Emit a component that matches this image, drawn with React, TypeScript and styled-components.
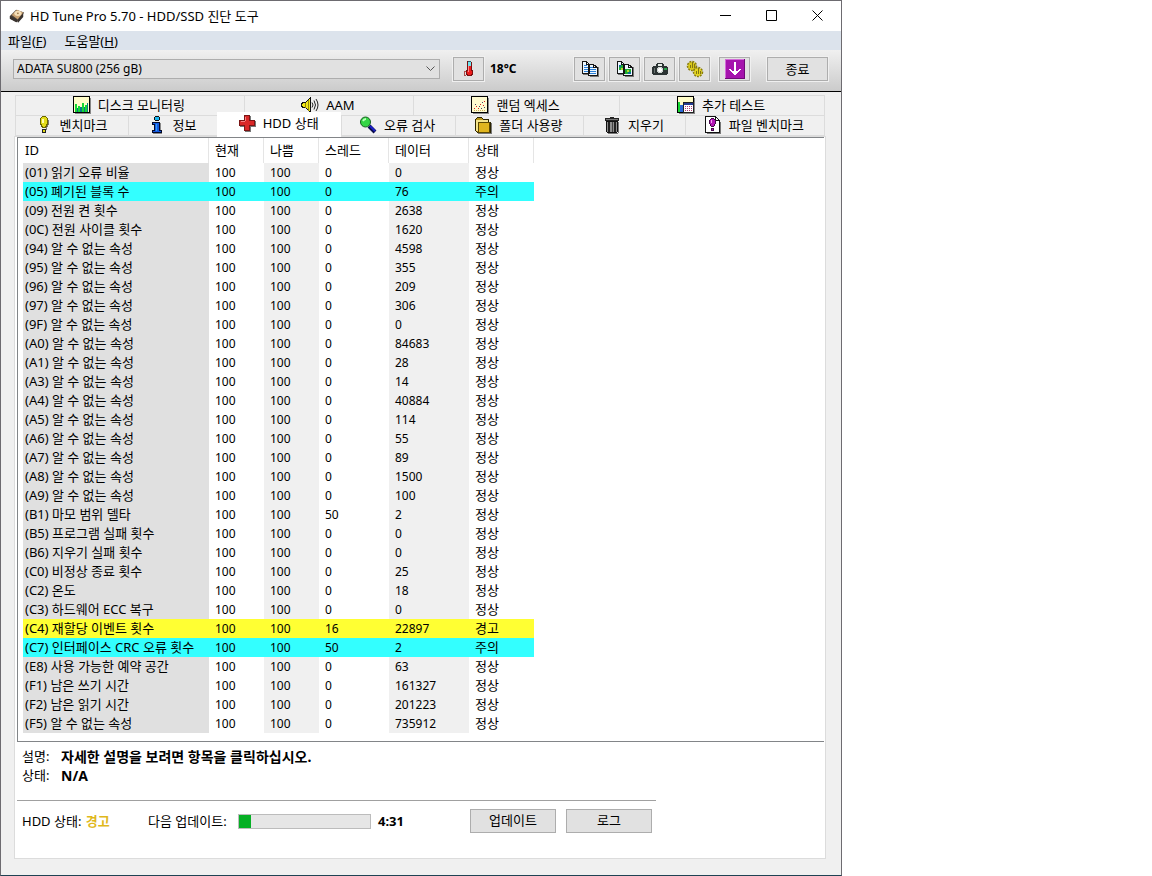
import React, { ReactNode } from "react";
import styled, { createGlobalStyle, css } from "styled-components";

const GlobalStyle = createGlobalStyle`
  * { box-sizing: border-box; }
  body {
    margin: 0;
    background: #ffffff;
    color: #000000;
    font: 13px/18px "Noto Sans", "Noto Sans CJK KR", sans-serif;
  }
  button, select { font: inherit; color: inherit; }
  svg { display: block; flex: none; }
`;

const AppWindow = styled.main`
  width: 100%;
  max-width: 842px;
  display: flex;
  flex-direction: column;
  background: #f0f0f0;
  border: 1px solid #6d6b70;
  border-bottom-color: #1f4253;
`;

const TitleBar = styled.header`
  display: flex;
  align-items: center;
  height: 30px;
  padding-left: 8px;
  gap: 5px;
  background: #ffffff;
`;

const Title = styled.h1`
  flex: 1;
  margin: 0;
  font-size: 13px;
  font-weight: 400;
`;

const Controls = styled.div`
  display: flex;
  align-self: stretch;
`;

const ControlButton = styled.button`
  display: flex;
  align-items: center;
  justify-content: center;
  width: 46px;
  padding: 0 1px 1px 0;
  border: 0;
  background: transparent;
`;

const MenuBar = styled.nav`
  display: flex;
  gap: 18px;
  height: 19px;
  padding-left: 7px;
  background: #dce3ec;
`;

const MenuItem = styled.button`
  padding: 0;
  border: 0;
  background: transparent;
`;

const Toolbar = styled.div`
  display: flex;
  align-items: center;
  height: 42px;
  padding: 0 13px 4px 12px;
  background: linear-gradient(#f0f0f0, #cbcbcb);
  border-bottom: 1px solid #000000;
`;

const DriveField = styled.div`
  display: flex;
  align-items: center;
  flex: 0 1 427px;
  min-width: 0;
  height: 20px;
  padding-right: 4px;
  background: #e1e1e1;
  border: 1px solid #adadad;
`;

const DriveSelect = styled.select`
  appearance: none;
  flex: 1;
  min-width: 0;
  height: 18px;
  padding: 0 0 0 3px;
  border: 0;
  background: transparent;
  font-size: 12px;
`;

const faceButton = css`
  display: flex;
  align-items: center;
  justify-content: center;
  flex: none;
  height: 24px;
  padding: 0;
  background: #e1e1e1;
  border: 1px solid #adadad;
`;

const ToolButton = styled.button<{ $lead?: number }>`
  ${faceButton}
  width: 31px;
  padding-left: 1px;
  margin-left: ${(p) => p.$lead ?? 4}px;
  outline: 1px solid #f0f0f0;
`;

const ExitButton = styled.button`
  ${faceButton}
  width: 61px;
  margin-left: 17px;
  outline: 1px solid #f0f0f0;
`;

const Temperature = styled.strong`
  flex: 1;
  padding-left: 6px;
  font-size: 12px;
`;

const Workspace = styled.div`
  padding: 3px 15px 16px 13px;
`;

const TabRow = styled.div`
  display: flex;
  margin: 0 1px;
  border-right: 1px solid #dcdcdc;
`;

const Tab = styled.button<{ $size: number; $active?: boolean }>`
  display: flex;
  align-items: center;
  justify-content: center;
  gap: 7px;
  flex: ${(p) => p.$size} 1 0;
  min-width: 0;
  height: 21px;
  margin-bottom: -1px;
  padding: 0 2px 2px 0;
  white-space: nowrap;
  background: #f0f0f0;
  border: solid #dcdcdc;
  border-width: 1px 0 1px 1px;
  ${(p) =>
    p.$active &&
    css`
      position: relative;
      height: 25px;
      margin-top: -3px;
      padding-bottom: 3px;
      background: #ffffff;
      border-color: #ffffff;
    `}
`;

const Panel = styled.section`
  background: #ffffff;
  border: 1px solid #dcdcdc;
  padding: 0 1px 25px 2px;
`;

const ListBox = styled.div`
  padding: 0 0 8px 5px;
  border: solid #828588;
  border-width: 1px 0 1px 1px;
`;

const Table = styled.table`
  width: 511px;
  table-layout: fixed;
  border-collapse: separate;
  border-spacing: 0;
`;

const HeadCell = styled.th<{ $width: number }>`
  width: ${(p) => p.$width}px;
  height: 25px;
  padding: 0 0 2px 6px;
  border-right: 1px solid #e5e5e5;
  text-align: left;
  font-weight: 400;
  &:first-child { padding-left: 2px; }
`;

const rowFill = { ok: "", notice: "#33ffff", warning: "#ffff33" };
type Level = keyof typeof rowFill;

const Row = styled.tr<{ $level: Level }>`
  background: ${(p) => rowFill[p.$level] || "#ffffff"};
  ${(p) =>
    p.$level === "ok" &&
    css`
      td:nth-child(odd) { background: #f0f0f0; }
      td:first-child { background: #e0e0e0; }
    `}
`;

const Cell = styled.td`
  height: 19px;
  padding: 0 0 0 6px;
  line-height: 19px;
  white-space: nowrap;
  &:first-child { padding-left: 2px; }
`;

const NumberCell = styled(Cell)`
  font-size: 12px;
`;

const Details = styled.dl`
  display: grid;
  grid-template-columns: 39px 1fr;
  align-items: center;
  margin: 5px 0 0;
  padding-left: 5px;
  line-height: 19px;
  dd { margin: 0; font-size: 14px; font-weight: 700; }
`;

const Rule = styled.hr`
  width: 639px;
  max-width: 100%;
  margin: 15px 0 8px;
  border: 0;
  border-top: 1px solid #a0a0a0;
`;

const StatusRow = styled.div`
  display: flex;
  align-items: center;
  padding-left: 5px;
`;

const Health = styled.span`
  width: 126px;
  strong { margin-left: 1px; color: #e0b81c; }
`;

const UpdateLabel = styled.label`
  width: 90px;
`;

const UpdateProgress = styled.progress`
  appearance: none;
  width: 133px;
  height: 15px;
  border: 1px solid #bcbcbc;
  background: #e6e6e6;
  &::-webkit-progress-bar { background: #e6e6e6; }
  &::-webkit-progress-value { background: #06b025; }
`;

const Countdown = styled.strong`
  width: 99px;
  padding-left: 7px;
`;

const ActionButton = styled.button`
  ${faceButton}
  width: 86px;
  padding-bottom: 2px;
  margin-right: 10px;
`;

/* ---- icons ---- */

const Icon = ({ children, size = 18 }: { children: ReactNode; size?: number }) => (
  <svg width={size} height={size} viewBox={`0 0 ${size} ${size}`} fill="none" shapeRendering="crispEdges" aria-hidden="true">
    {children}
  </svg>
);

const DriveIcon = () => (
  <svg width="16" height="16" viewBox="0 0 18 18" aria-hidden="true">
    <path d="M1 9 8 2l9 3-6 10-3 1-7-4z" fill="#4a4038" />
    <path d="m3 8 6-6 7 3-6 8z" fill="#c8a070" />
    <ellipse cx="10" cy="6" rx="4" ry="3" fill="#f5dfb8" />
    <path d="m1 9 8 4v3l-8-4zM10 13l6-7v4l-6 7z" fill="#39332f" />
    <circle cx="10" cy="6" r="1" fill="#9b7548" />
  </svg>
);

const ThermometerIcon = () => (
  <Icon>
    <path d="M10 2h2v8h1v5h-1v1h-4v-1h5v-4h-1z" fill="#555" />
    <path d="M7 1h4v1h1v8h1v5h-1v1H7v-1H6v-5h1z" fill="#7a1010" />
    <path d="M8 1h3v1H8z" fill="#28606a" />
    <path d="M8 2h3v4H8z" fill="#72e4ee" />
    <path d="M8 6h3v5h1v3h-1v1H8v-1H7v-3h1z" fill="#ee1c1c" />
    <path d="M8 6h1v6H8z" fill="#ff8c8c" />
    <path d="M4 11h2v1H5v3h1v1H4z" fill="#b05050" />
  </Icon>
);

const Sheets = ({ children }: { children: ReactNode }) => (
  <Icon>
    <path d="M9 16h8V7h1v10H9zM2 14h5v1H2z" fill="#777" />
    <path d="M1.500 1.500h4l3 3v9h-7zM7.500 4.500h5l4 3v8h-9z" fill="#eef8ff" stroke="#151515" />
    <path d="M5.500 1.500v3h3M12.500 4.500v3h4" stroke="#151515" />
    {children}
  </Icon>
);

const CopyTextIcon = () => (
  <Sheets>
    <path d="M3 5.500h3M3 7.500h4M3 9.500h4M3 11.500h4M9 7.500h3M9 9.500h6M9 11.500h6M9 13.500h6" stroke="#2a7fd8" />
  </Sheets>
);

const CopyImageIcon = () => (
  <Sheets>
    <path d="M3 5h4v5H3zM9 9h6v5H9z" fill="#1fae32" />
    <path d="M3 5h2v2H3zM12 12h3v2h-3z" fill="#116c9c" />
    <path d="M5 8h2v2H5zM11 10h2v2h-2z" fill="#b9d830" />
  </Sheets>
);

const CameraIcon = () => (
  <Icon>
    <path d="M2 6h3V4h1V3h6v1h1v2h3v1h1v7h-1v1H2v-1H1V7h1z" fill="#2c3434" />
    <path d="M7 4h4v2H7z" fill="#e8eee8" />
    <path d="M7 7h4v1h1v4h-1v1H7v-1H6V8h1z" fill="#cfd6d3" />
    <path d="M8 8h2v1h1v2h-1v1H8v-1H7V9h1z" fill="#ffffff" />
    <path d="M13 8h3v2h-3z" fill="#28a348" />
    <path d="M3 8h1v5H3z" fill="#687270" />
  </Icon>
);

const GearsIcon = () => (
  <Icon>
    <g shapeRendering="auto">
      <circle cx="6" cy="6" r="4" fill="#d9c916" />
      <circle cx="6" cy="6" r="4.500" stroke="#8a7d08" strokeWidth="1.500" strokeDasharray="2 1" />
      <circle cx="12" cy="12" r="4" fill="#e5d51d" />
      <circle cx="12" cy="12" r="4.500" stroke="#8a7d08" strokeWidth="1.500" strokeDasharray="2 1" />
    </g>
    <path d="M6.500 2v6M4.500 5v3M8.500 4v4M12.500 8v6M10.500 11v3M14.500 11v3" stroke="#817511" />
  </Icon>
);

const DownloadIcon = () => (
  <Icon size={20}>
    <rect width="20" height="20" fill="#a514ad" />
    <path d="M0 19.500h20M19.500 0v20" stroke="#6f0a78" />
    <path d="M.5 19V.500H19" stroke="#d36bd8" />
    <path d="M9 3h2v9h2v-1h1v-1h2v1h-1v1h-1v1h-1v1h-1v1h-1v1H9v-1H8v-1H7v-1H6v-1H5v-1H4v-1h2v1h1v1h2z" fill="#fff" />
  </Icon>
);

const MonitorIcon = () => (
  <Icon>
    <path d="M17 2h1v16H2v-1h15z" fill="#888" />
    <path d="M.5.500h16v16H.500z" fill="#fffcc8" stroke="#000" />
    <path d="M2 8h2v8H2zM5 10h2v6H5zM9 7h2v9H9zM12 9h3v7h-3z" fill="#16d833" />
    <path d="M4 12h1v4H4zM7 11h2v5H7zM11 11h1v5h-1zM14 7h1v9h-1z" fill="#087b83" />
  </Icon>
);

const SpeakerIcon = () => (
  <Icon>
    <path d="M1.500 6.500h3l5-5v15l-5-5h-3l-1-2v-1z" fill="#f0e516" stroke="#111" />
    <path d="M4.500 7v5M7.500 4v11" stroke="#8f8610" />
    <g shapeRendering="auto">
      <path d="M11 6.500q2 2.500 0 5M13 4.500q3 4.500 0 9M15 3q4 6 0 12" stroke="#222" />
    </g>
  </Icon>
);

const ScatterIcon = () => (
  <Icon>
    <path d="M17 2h1v16H2v-1h15z" fill="#888" />
    <path d="M.5.500h16v16H.500z" fill="#fffbd0" stroke="#000" />
    <path d="M3 12h1v1H3zM5 10h1v1H5zM7 12h1v1H7zM9 8h1v1H9zM12 9h1v1h-1zM13 5h1v1h-1z" fill="#d22" />
    <path d="M4 8h1v1H4zM8 10h1v1H8zM11 6h1v1h-1zM13 11h1v1h-1zM10 12h1v1h-1z" fill="#446" />
    <path d="M3 14.500h12" stroke="#c9ae58" strokeDasharray="1 1" />
  </Icon>
);

const ExtraIcon = () => (
  <Icon>
    <path d="M17 2h1v16H2v-1h15z" fill="#888" />
    <path d="M.5.500h16v16H.500z" fill="#fffcc8" stroke="#000" />
    <path d="M1 6h2v10H1z" fill="#16d833" />
    <path d="M3 9h3v7H3z" fill="#2b67d6" />
    <path d="M6.500 6.500h10v10h-10z" fill="#fff" stroke="#222" />
    <path d="M7 7h9v2H7z" fill="#243a91" />
    <path d="M8 10.500h8M8 12.500h8M8 14.500h8" stroke="#b23b75" strokeDasharray="1 1" />
  </Icon>
);

const BulbIcon = () => (
  <Icon>
    <path d="M13 4h1v5h-1v2h-1v3h-1V9h2z" fill="#777" />
    <path d="M7.500.5h3l2 2v5l-1 2-1 2h-3l-1-2-1-2v-5z" fill="#e2dc18" stroke="#6a6500" />
    <path d="M7 3h2v4H7z" fill="#fffbb0" />
    <path d="M7.500 13.500h3v3h-3z" fill="#e2dc18" stroke="#222" />
  </Icon>
);

const InfoIcon = () => (
  <Icon>
    <path d="M13 7h1v7h1v4H6v-1h7z" fill="#888" />
    <path d="M8.500.5h3l1 1v2l-1 1h-3l-1-1v-2z" fill="#19b6f0" stroke="#111" />
    <path d="M5.500 6.500h7v8h2v2h-9v-2h2v-6h-2z" fill="#1459e0" stroke="#050a28" />
    <path d="M9 8h1v7H9z" fill="#2d9cff" />
  </Icon>
);

const CrossIcon = () => (
  <Icon>
    <path d="M7 2h6v5h5v6h-5v5H7v-5H2V7h5z" fill="#777" />
    <path d="M6.500 1.500h5v5h5v5h-5v5h-5v-5h-5v-5h5z" fill="#d92727" stroke="#7a1515" />
    <path d="M7.500 7V2.500M2.500 7.500H7" stroke="#f78080" />
  </Icon>
);

const LensIcon = () => (
  <svg width="18" height="18" viewBox="0 0 18 18" fill="none" aria-hidden="true">
    <path d="m10 10 6 6" stroke="#0a0a4a" strokeWidth="4" />
    <path d="m11 10 5 5" stroke="#1a22c8" strokeWidth="2" />
    <circle cx="6.500" cy="6" r="5" fill="#35d645" stroke="#16601f" />
    <path d="M4 5q1-2 3-2" stroke="#baffba" strokeWidth="2" />
  </svg>
);

const FolderIcon = () => (
  <Icon>
    <path d="M16 7h2v11H4v-1h12z" fill="#777" />
    <path d="M1.500 3.500l2-2h4l2 2h5v3h1.500v10h-12.500l-2-2z" fill="#b89415" stroke="#2c2400" />
    <path d="M2 4h12v2H4v9H2z" fill="#f3e38a" />
    <path d="M4.500 6.500h11v10h-11z" fill="#e0b51f" stroke="#5c4802" />
  </Icon>
);

const TrashIcon = () => (
  <Icon>
    <path d="M15 6h1v11h-1v1H5v-1h10z" fill="#777" />
    <path d="M2 2h5V1h4v1h5v3H2z" fill="#222" />
    <path d="M3 3h12v1H3z" fill="#777" />
    <path d="M3.500 5.500h11v10l-1 1h-9l-1-1z" fill="#8d8d8d" stroke="#111" />
    <path d="M6 6v10M12 6v10" stroke="#222" strokeWidth="2" />
    <path d="M9.500 6v10" stroke="#444" />
  </Icon>
);

const FileBenchIcon = () => (
  <Icon>
    <path d="M16 6h1v12H3v-1h13z" fill="#777" />
    <path d="M1.500.5h10l4 4v12h-14z" fill="#fff" stroke="#111" />
    <path d="M11.500.5v4h4" stroke="#111" />
    <path d="M7.500 2.500h2l2 2v3l-2 3h-2l-2-3v-3z" fill="#b516b8" stroke="#45084a" />
    <path d="M7.500 12.500h2v2h-2z" fill="#b516b8" stroke="#45084a" />
    <path d="M7 4h1v3H7z" fill="#f1a2f3" />
  </Icon>
);

/* ---- data ---- */

type TabItem = { label: string; size: number; icon: ReactNode; active?: boolean };

const tabRows: TabItem[][] = [
  [
    { label: "디스크 모니터링", size: 229, icon: <MonitorIcon /> },
    { label: "AAM", size: 169, icon: <SpeakerIcon /> },
    { label: "랜덤 엑세스", size: 206, icon: <ScatterIcon /> },
    { label: "추가 테스트", size: 205, icon: <ExtraIcon /> },
  ],
  [
    { label: "벤치마크", size: 113, icon: <BulbIcon /> },
    { label: "정보", size: 88, icon: <InfoIcon /> },
    { label: "HDD 상태", size: 124, icon: <CrossIcon />, active: true },
    { label: "오류 검사", size: 114, icon: <LensIcon /> },
    { label: "폴더 사용량", size: 129, icon: <FolderIcon /> },
    { label: "지우기", size: 101, icon: <TrashIcon /> },
    { label: "파일 벤치마크", size: 140, icon: <FileBenchIcon /> },
  ],
];

const columns: [string, number][] = [
  ["ID", 186],
  ["현재", 55],
  ["나쁨", 55],
  ["스레드", 70],
  ["데이터", 80],
  ["상태", 65],
];

const unknown = "알 수 없는 속성";

const attributes: [string, string, number, number, Level?][] = [
  ["01", "읽기 오류 비율", 0, 0],
  ["05", "폐기된 블록 수", 0, 76, "notice"],
  ["09", "전원 켠 횟수", 0, 2638],
  ["0C", "전원 사이클 횟수", 0, 1620],
  ["94", unknown, 0, 4598],
  ["95", unknown, 0, 355],
  ["96", unknown, 0, 209],
  ["97", unknown, 0, 306],
  ["9F", unknown, 0, 0],
  ["A0", unknown, 0, 84683],
  ["A1", unknown, 0, 28],
  ["A3", unknown, 0, 14],
  ["A4", unknown, 0, 40884],
  ["A5", unknown, 0, 114],
  ["A6", unknown, 0, 55],
  ["A7", unknown, 0, 89],
  ["A8", unknown, 0, 1500],
  ["A9", unknown, 0, 100],
  ["B1", "마모 범위 델타", 50, 2],
  ["B5", "프로그램 실패 횟수", 0, 0],
  ["B6", "지우기 실패 횟수", 0, 0],
  ["C0", "비정상 종료 횟수", 0, 25],
  ["C2", "온도", 0, 18],
  ["C3", "하드웨어 ECC 복구", 0, 0],
  ["C4", "재할당 이벤트 횟수", 16, 22897, "warning"],
  ["C7", "인터페이스 CRC 오류 횟수", 50, 2, "notice"],
  ["E8", "사용 가능한 예약 공간", 0, 63],
  ["F1", "남은 쓰기 시간", 0, 161327],
  ["F2", "남은 읽기 시간", 0, 201223],
  ["F5", unknown, 0, 735912],
];

const levelText: Record<Level, string> = { ok: "정상", notice: "주의", warning: "경고" };

export default function App() {
  return (
    <>
      <GlobalStyle />
      <AppWindow>
        <TitleBar>
          <DriveIcon />
          <Title>HD Tune Pro 5.70 - HDD/SSD 진단 도구</Title>
          <Controls>
            <ControlButton aria-label="최소화">
              <svg width="11" height="11"><path d="M0 5.500h11" stroke="#000" /></svg>
            </ControlButton>
            <ControlButton aria-label="최대화">
              <svg width="11" height="11"><path d="M.5.500h10v10H.500z" fill="none" stroke="#000" /></svg>
            </ControlButton>
            <ControlButton aria-label="닫기">
              <svg width="11" height="11"><path d="m.5.500 10 10m0-10-10 10" stroke="#000" /></svg>
            </ControlButton>
          </Controls>
        </TitleBar>

        <MenuBar>
          <MenuItem>파일(<u>F</u>)</MenuItem>
          <MenuItem>도움말(<u>H</u>)</MenuItem>
        </MenuBar>

        <Toolbar>
          <DriveField>
            <DriveSelect aria-label="드라이브">
              <option>ADATA SU800 (256 gB)</option>
            </DriveSelect>
            <svg width="9" height="6"><path d="m.5.500 4 4 4-4" fill="none" stroke="#555" /></svg>
          </DriveField>
          <ToolButton $lead={13} aria-label="온도"><ThermometerIcon /></ToolButton>
          <Temperature>18°C</Temperature>
          <ToolButton aria-label="텍스트 복사"><CopyTextIcon /></ToolButton>
          <ToolButton aria-label="그림 복사"><CopyImageIcon /></ToolButton>
          <ToolButton aria-label="스크린샷"><CameraIcon /></ToolButton>
          <ToolButton aria-label="설정"><GearsIcon /></ToolButton>
          <ToolButton $lead={9} aria-label="저장"><DownloadIcon /></ToolButton>
          <ExitButton>종료</ExitButton>
        </Toolbar>

        <Workspace>
          {tabRows.map((row, i) => (
            <TabRow key={i} role="tablist">
              {row.map((tab) => (
                <Tab key={tab.label} role="tab" aria-selected={!!tab.active} $size={tab.size} $active={tab.active}>
                  {tab.icon}
                  {tab.label}
                </Tab>
              ))}
            </TabRow>
          ))}
          <Panel>
            <ListBox>
              <Table>
                <thead>
                  <tr>
                    {columns.map(([name, width]) => (
                      <HeadCell key={name} $width={width} scope="col">{name}</HeadCell>
                    ))}
                  </tr>
                </thead>
                <tbody>
                  {attributes.map(([id, name, threshold, data, level = "ok"]) => (
                    <Row key={id} $level={level}>
                      <Cell>({id}) {name}</Cell>
                      <NumberCell>100</NumberCell>
                      <NumberCell>100</NumberCell>
                      <NumberCell>{threshold}</NumberCell>
                      <NumberCell>{data}</NumberCell>
                      <Cell>{levelText[level]}</Cell>
                    </Row>
                  ))}
                </tbody>
              </Table>
            </ListBox>
            <Details>
              <dt>설명:</dt>
              <dd>자세한 설명을 보려면 항목을 클릭하십시오.</dd>
              <dt>상태:</dt>
              <dd>N/A</dd>
            </Details>
            <Rule />
            <StatusRow>
              <Health>HDD 상태: <strong>경고</strong></Health>
              <UpdateLabel htmlFor="next-update">다음 업데이트:</UpdateLabel>
              <UpdateProgress id="next-update" value={9} max={100} />
              <Countdown>4:31</Countdown>
              <ActionButton>업데이트</ActionButton>
              <ActionButton>로그</ActionButton>
            </StatusRow>
          </Panel>
        </Workspace>
      </AppWindow>
    </>
  );
}
